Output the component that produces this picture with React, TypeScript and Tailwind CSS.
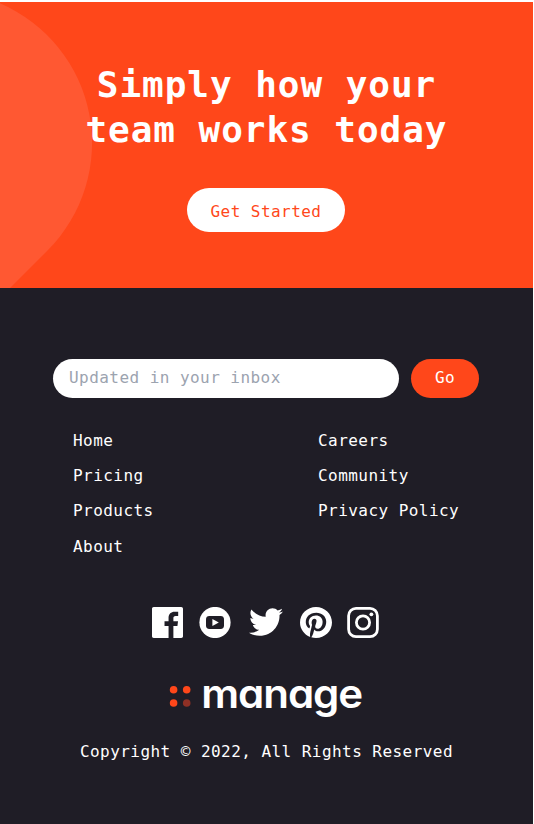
import React from "react";
import { FaTwitter } from "react-icons/fa";

const leftLinks = ["Home", "Pricing", "Products", "About"];
const rightLinks = ["Careers", "Community", "Privacy Policy"];

function Facebook() {
  return (
    <svg className="h-[31px] w-[31px]" viewBox="0 0 20 20" fill="currentColor">
      <path d="M18.896 0H1.104C.494 0 0 .494 0 1.104v17.793C0 19.506.494 20 1.104 20h9.58v-7.745H8.076V9.237h2.606V7.01c0-2.583 1.578-3.99 3.883-3.99 1.104 0 2.052.082 2.329.119v2.7h-1.598c-1.254 0-1.496.597-1.496 1.47v1.928h2.989l-.39 3.018h-2.6V20h5.098c.608 0 1.102-.494 1.102-1.104V1.104C20 .494 19.506 0 18.896 0z" />
    </svg>
  );
}

function Youtube() {
  return (
    <svg className="h-[31px] w-8" viewBox="0 0 32 31">
      <circle cx="16" cy="15.5" r="15.6" fill="#fff" />
      <rect x="7" y="9" width="18" height="13" rx="3.4" fill="#1f1d26" />
      <path d="M13.4 12v7l6.4-3.5z" fill="#fff" />
    </svg>
  );
}

function Pinterest() {
  return (
    <svg className="h-[31px] w-8" viewBox="0 0 20 20" preserveAspectRatio="none" fill="currentColor">
      <path d="M10 0C4.478 0 0 4.477 0 10c0 4.237 2.636 7.855 6.356 9.312-.087-.791-.167-2.005.035-2.868.182-.78 1.172-4.97 1.172-4.97s-.299-.6-.299-1.486c0-1.39.806-2.428 1.81-2.428.852 0 1.264.64 1.264 1.408 0 .858-.545 2.14-.828 3.33-.236.995.5 1.807 1.48 1.807 1.778 0 3.144-1.874 3.144-4.58 0-2.393-1.72-4.068-4.177-4.068-2.845 0-4.515 2.135-4.515 4.34 0 .859.331 1.781.745 2.281a.3.3 0 01.069.288l-.278 1.133c-.044.183-.145.223-.335.134-1.249-.581-2.03-2.407-2.03-3.874 0-3.154 2.292-6.052 6.608-6.052 3.469 0 6.165 2.473 6.165 5.776 0 3.447-2.173 6.22-5.19 6.22-1.013 0-1.965-.525-2.291-1.148l-.623 2.378c-.226.869-.835 1.958-1.244 2.621.937.29 1.931.446 2.962.446 5.522 0 10-4.477 10-10S15.522 0 10 0z" />
    </svg>
  );
}

function Instagram() {
  return (
    <svg className="h-[31px] w-8" viewBox="0 0 32 31" fill="none" stroke="#fff" strokeWidth="2.8">
      <rect x="1.6" y="1.4" width="28.8" height="28.2" rx="7.4" />
      <circle cx="16" cy="15.5" r="6.6" />
      <circle cx="24.4" cy="7.3" r="1.9" fill="#fff" stroke="none" />
    </svg>
  );
}

function Logo() {
  return (
    <svg className="h-[52px] w-[200px] overflow-visible" viewBox="0 0 200 52">
      <circle cx="7.6" cy="18.8" r="3.8" fill="#ff471a" />
      <circle cx="20.7" cy="18.8" r="3.8" fill="#ff471a" />
      <circle cx="7.6" cy="32" r="3.8" fill="#ff471a" />
      <circle cx="20.7" cy="32" r="3.8" fill="#8f3025" />
      <text
        x="35.2"
        y="36.7"
        textLength="161"
        lengthAdjust="spacingAndGlyphs"
        fill="#fff"
        className="font-['Inter',sans-serif] text-[40px] font-semibold tracking-[-1px] [font-feature-settings:'cv11']"
      >
        manage
      </text>
    </svg>
  );
}

export default function App() {
  return (
    <div className="h-[824px] w-[534px] overflow-hidden bg-white pt-[2px] pr-px font-['DejaVu_Sans_Mono',monospace] text-base tracking-[0.45px] text-white">
      <section className="relative h-[286px] overflow-hidden bg-[#ff471a]">
        <svg className="absolute top-0 left-0 h-[286px] w-[100px]" viewBox="0 2 100 286">
          <path
            d="M0 3.3A152 152 0 0 1 47.5 250.5L9 289H0z"
            fill="#ff5832"
          />
        </svg>
        <div className="relative flex flex-col items-center pt-[60px]">
          <h2 className="text-center text-[36px] leading-[45px] font-bold tracking-[0.95px]">
            Simply how your
            <br />
            team works today
          </h2>
          <button className="mt-9 mr-px h-11 w-[158px] rounded-full bg-white pt-[3px] text-[#ff471a] tracking-[0.45px]">
            Get Started
          </button>
        </div>
      </section>
      <footer className="h-[536px] bg-[#1f1d26] pt-[71px]">
        <div className="flex gap-3 pl-[53px]">
          <input
            className="h-[39px] w-[346px] rounded-full bg-white px-4 pb-0.5 tracking-[0.45px] text-gray-800 outline-none placeholder:text-[#9ca3af]"
            placeholder="Updated in your inbox"
          />
          <button className="h-[39px] w-[68px] rounded-full bg-[#ff471a] pb-px tracking-[0.45px]">Go</button>
        </div>
        <nav className="mt-[31px] flex pl-[73px]">
          <ul className="w-[245px]">
            {leftLinks.map((label) => (
              <li key={label} className="h-[35.2px] leading-6">{label}</li>
            ))}
          </ul>
          <ul>
            {rightLinks.map((label) => (
              <li key={label} className="h-[35.2px] leading-6">{label}</li>
            ))}
          </ul>
        </nav>
        <div className="mt-[37.2px] flex h-[31px] items-center pl-[152px]">
          <Facebook />
          <div className="ml-4"><Youtube /></div>
          <FaTwitter className="ml-[18px] h-[34px] w-[34px]" />
          <div className="ml-[17px]"><Pinterest /></div>
          <div className="ml-[15px]"><Instagram /></div>
        </div>
        <div className="mt-[33px] flex pl-[166px]">
          <Logo />
        </div>
        <p className="mt-[17px] text-center leading-6">Copyright © 2022, All Rights Reserved</p>
      </footer>
    </div>
  );
}
